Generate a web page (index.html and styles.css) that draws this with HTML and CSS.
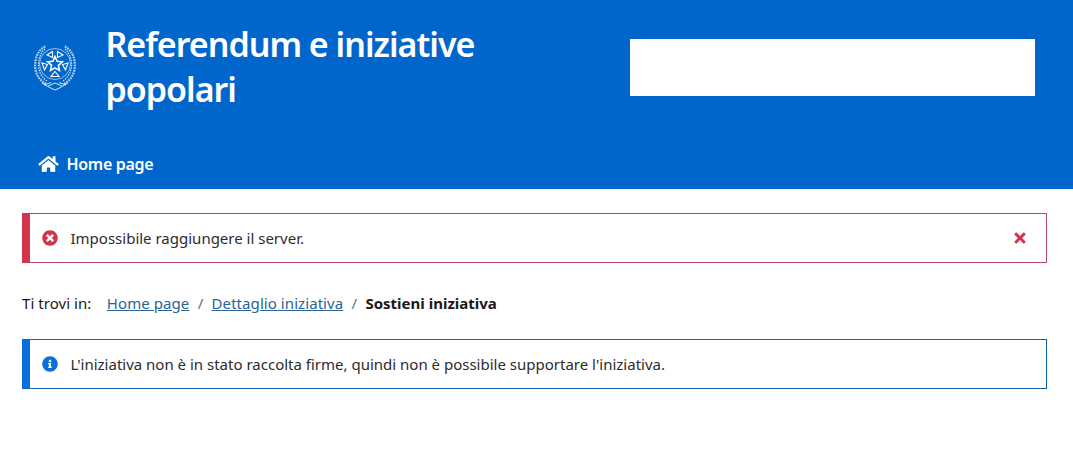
FILE: index.html
```html
<!DOCTYPE html>
<html lang="it">
<head>
<meta charset="utf-8">
<title>Referendum e iniziative popolari</title>
<link rel="stylesheet" href="styles.css">
</head>
<body>
<header class="site-header">
  <div class="brand-row">
    <div class="brand">
      <svg class="emblem" viewBox="0 0 42 48" fill="none" stroke="#fff" aria-hidden="true">
        <g stroke-width="2.200" stroke-dasharray="1.800 .9" opacity=".7">
          <path d="M12 41C3 36 0 27 1.500 18C2.500 11 6 6 12 3"/>
          <path d="M30 41C39 36 42 27 40.500 18C39.500 11 36 6 30 3"/>
        </g>
        <g stroke-width="1.200" stroke-dasharray="1.500 1" opacity=".85">
          <path d="M13 38C7 34 4 27 4.500 20C5 14 7.500 9 11 6"/>
          <path d="M29 38C35 34 38 27 37.500 20C37 14 34.500 9 31 6"/>
        </g>
        <g stroke-width="1" opacity=".85">
          <path d="M8 40C13 43 17 45.500 21 47C25 45.500 29 43 34 40"/>
          <path d="M14 43L21 40L28 43M10 42L17 39.500M32 42L25 39.500"/>
          <circle cx="21" cy="21" r="15.500" stroke-width=".7"/>
        </g>
        <g stroke-width="1.100">
          <path d="M21 13.500L23.100 18.300L28.300 18.800L24.400 22.300L25.500 27.400L21 24.800L16.500 27.400L17.600 22.300L13.700 18.800L18.900 18.300Z" stroke-width="1.600"/>
          <path d="M18.500 8.500L18.500 14.500L13 12Z"/>
          <path d="M23.500 8.500L23.500 14.500L29 12Z"/>
          <path d="M8 20L13.500 21.500L10.500 27Z"/>
          <path d="M34 20L28.500 21.500L31.500 27Z"/>
          <path d="M21 28.500L25 33.500L17 33.500Z"/>
        </g>
      </svg>
      <h1 class="site-title">Referendum e iniziative popolari</h1>
    </div>
    <div class="search-box"></div>
  </div>
  <nav class="main-nav">
    <a class="nav-link" href="#">
      <svg class="nav-icon" viewBox="0 0 576 512" fill="#fff" aria-hidden="true"><path d="M280.4 148.3L96 300.1V464a16 16 0 0 0 16 16l112.1-.3a16 16 0 0 0 15.9-16V368a16 16 0 0 1 16-16h64a16 16 0 0 1 16 16v95.6a16 16 0 0 0 16 16.1L464 480a16 16 0 0 0 16-16V300L295.7 148.3a12.2 12.2 0 0 0-15.3 0zM571.6 251.5L488 182.6V44.1a12 12 0 0 0-12-12h-56a12 12 0 0 0-12 12v72.6L318.5 43a48 48 0 0 0-61 0L4.3 251.5a12 12 0 0 0-1.6 16.9l25.5 31A12 12 0 0 0 45.2 301l235.2-193.7a12.2 12.2 0 0 1 15.3 0L530.9 301a12 12 0 0 0 16.9-1.6l25.5-31a12 12 0 0 0-1.7-16.9z"/></svg>
      <span>Home page</span>
    </a>
  </nav>
</header>
<main class="content">
  <div class="alert alert-danger">
    <svg class="alert-icon" viewBox="0 0 512 512" fill="#d1344c" aria-hidden="true"><path d="M256 8C119 8 8 119 8 256s111 248 248 248 248-111 248-248S393 8 256 8zm121.6 313.1c4.7 4.7 4.7 12.3 0 17L338 377.6c-4.7 4.7-12.3 4.7-17 0L256 312l-65.1 65.6c-4.7 4.7-12.3 4.7-17 0L134.4 338c-4.7-4.7-4.7-12.3 0-17l65.6-65-65.6-65.1c-4.7-4.7-4.7-12.3 0-17l39.6-39.6c4.7-4.7 12.3-4.7 17 0l65 65.7 65.1-65.6c4.7-4.7 12.3-4.7 17 0l39.6 39.6c4.7 4.7 4.7 12.3 0 17L312 256l65.6 65.1z"/></svg>
    <span class="alert-text">Impossibile raggiungere il server.</span>
    <svg class="alert-close" viewBox="0 0 352 512" fill="#d1344c" aria-hidden="true"><path d="M242.7 256l100-100c12.3-12.3 12.3-32.2 0-44.5l-22.2-22.2c-12.3-12.3-32.2-12.3-44.5 0L176 189.3 76 89.300c-12.3-12.3-32.2-12.3-44.500 0L9.300 111.500c-12.300 12.300-12.300 32.200 0 44.500L109.300 256 9.300 356c-12.300 12.300-12.300 32.200 0 44.500l22.200 22.200c12.300 12.300 32.200 12.300 44.500 0L176 322.700l100 100c12.300 12.300 32.200 12.300 44.500 0l22.200-22.200c12.300-12.300 12.300-32.200 0-44.500L242.700 256z"/></svg>
  </div>
  <nav class="breadcrumb">
    <span class="crumb-label">Ti trovi in:</span>
    <a class="crumb-link" href="#">Home page</a>
    <span class="crumb-sep">/</span>
    <a class="crumb-link" href="#">Dettaglio iniziativa</a>
    <span class="crumb-sep">/</span>
    <strong class="crumb-current">Sostieni iniziativa</strong>
  </nav>
  <div class="alert alert-info">
    <svg class="alert-icon" viewBox="0 0 512 512" fill="#0a6fdc" aria-hidden="true"><path d="M256 8C119 8 8 119 8 256c0 137 111 248 248 248s248-111 248-248C504 119 393 8 256 8zm0 110c23.200 0 42 18.800 42 42s-18.800 42-42 42-42-18.800-42-42 18.800-42 42-42zm56 254c0 6.600-5.400 12-12 12h-88c-6.600 0-12-5.400-12-12v-24c0-6.600 5.400-12 12-12h12v-64h-12c-6.600 0-12-5.400-12-12v-24c0-6.600 5.400-12 12-12h64c6.600 0 12 5.400 12 12v100h12c6.600 0 12 5.400 12 12v24z"/></svg>
    <span class="alert-text">L'iniziativa non è in stato raccolta firme, quindi non è possibile supportare l'iniziativa.</span>
  </div>
</main>
</body>
</html>
```
FILE: styles.css
```css
* { box-sizing: border-box; }
html, body { margin: 0; padding: 0; }
body {
  background: #fff;
  color: #19191a;
  font-family: "Noto Sans", "Open Sans", sans-serif;
  font-size: 15px;
}
.site-header {
  background: #0066cc;
  color: #fff;
  height: 189px;
  padding: 22px 38px 0 34px;
}
.brand-row {
  display: flex;
  align-items: flex-start;
  justify-content: space-between;
}
.brand {
  display: flex;
  align-items: center;
  gap: 29.500px;
  width: 480px;
}
.emblem { width: 42px; height: 48px; flex: none; }
.site-title {
  margin: 0;
  width: 400px;
  font-size: 34px;
  font-weight: 600;
  line-height: 45px;
  letter-spacing: -1px;
}
.search-box {
  width: 405px;
  height: 57px;
  margin-top: 17px;
  background: #fff;
}
.main-nav { margin-top: 41px; padding-left: 4px; }
.nav-link {
  display: inline-flex;
  align-items: center;
  gap: 7.500px;
  color: #fff;
  font-size: 16px;
  font-weight: 600;
  letter-spacing: -0.3px;
  text-decoration: none;
}
.nav-icon { width: 21px; height: 18px; }
.content { padding: 24px 26px 0 22px; }
.alert {
  display: flex;
  align-items: center;
  height: 50px;
  padding: 0 20px 0 12px;
  border: 1px solid;
  border-left-width: 8px;
  background: #fff;
}
.alert-danger { border-color: #b04b63; border-left-color: #d1344c; }
.alert-info { border-color: #0f62ad; border-left-color: #0a6fdc; }
.alert-icon { width: 16px; height: 16px; flex: none; }
.alert-text { margin-left: 12.500px; flex: 1; color: #2c2c2e; }
.alert-close { width: 12px; height: 16px; flex: none; }
.breadcrumb {
  display: flex;
  align-items: center;
  height: 26px;
  margin: 27px 0 23px;
  color: #19191a;
}
.crumb-label { margin-right: 15.500px; letter-spacing: .05px; }
.crumb-link { color: #2a6496; letter-spacing: .07px; }
.crumb-sep { margin: 0 8.300px; color: #5c6f82; }
.crumb-current { font-weight: 700; }
```
